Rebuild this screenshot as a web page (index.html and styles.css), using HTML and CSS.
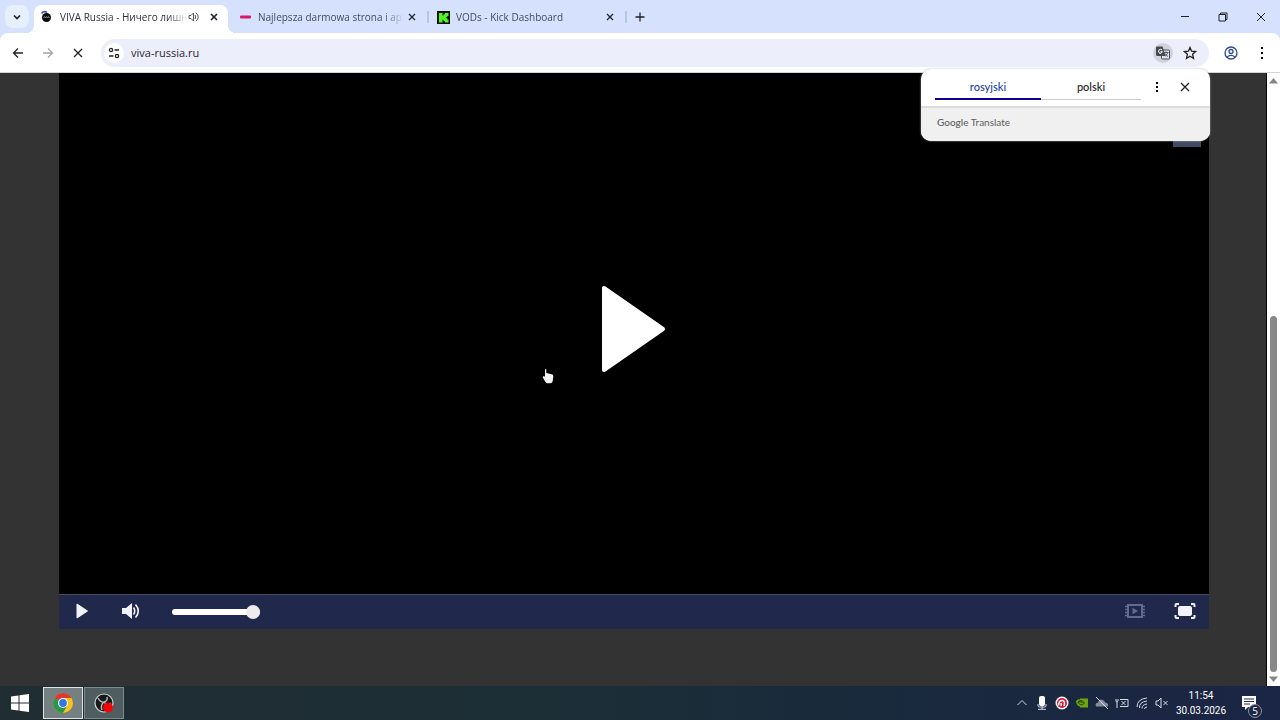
FILE: index.html
```html
<!DOCTYPE html>
<html lang="pl">
<head>
  <meta charset="UTF-8">
  <title>VIVA Russia</title>
  <link rel="stylesheet" href="styles.css">
</head>
<body>
  <!-- Tab strip -->
  <header class="tab-strip">
    <button class="tab-search" aria-label="Search tabs">
      <svg width="10" height="10" viewBox="0 0 10 10"><path d="M2 3.500l3 3 3-3" class="line bold"/></svg>
    </button>
    <div class="tab active">
      <svg class="favicon" width="14" height="14" viewBox="0 0 14 14">
        <circle cx="6.500" cy="7.500" r="4.500" fill="#08080d"/>
        <path d="M1.500 3.500Q4 .5 7 2.500" stroke="#3d4bb8" stroke-width="1.600" fill="none"/>
        <path d="M3.500 8l1-1.500 1 1.500 1-1.500 1 1.500 1-1.500.8 1.500" stroke="#aaa" stroke-width=".8" fill="none"/>
      </svg>
      <span class="tab-title">VIVA Russia - Ничего лишн</span>
      <svg class="audio" width="12" height="12" viewBox="0 0 12 12"><path d="M1 4.500h2L5.500 2v8L3 7.500H1zM7 4q1.500 2 0 4M8 1.800q4.500 4.200 0 8.400" class="line thin"/></svg>
      <button class="tab-close" aria-label="Close tab"><svg width="8" height="8" viewBox="0 0 8 8"><path d="M1 1l6 6M7 1L1 7" class="line bold"/></svg></button>
    </div>
    <div class="tab">
      <svg class="favicon" width="14" height="14" viewBox="0 0 14 14"><rect x="2" y="5.500" width="11" height="3" rx="1" fill="#d91668"/></svg>
      <span class="tab-title">Najlepsza darmowa strona i apl</span>
      <button class="tab-close" aria-label="Close tab"><svg width="8" height="8" viewBox="0 0 8 8"><path d="M1 1l6 6M7 1L1 7" class="line"/></svg></button>
    </div>
    <span class="tab-sep"></span>
    <div class="tab">
      <svg class="favicon" width="14" height="14" viewBox="0 0 14 14">
        <rect x="1" y="1" width="13" height="13" fill="#061006"/>
        <path d="M3 3h3.500v2.500h1V4.200H9V3h3.500v3h-1.200v1.200h-1.200v1h1.200v1.200h1.200v3H9v-1.200H7.500V9.800h-1v2.600H3z" fill="#4ff52a"/>
      </svg>
      <span class="tab-title">VODs - Kick Dashboard</span>
      <button class="tab-close" aria-label="Close tab"><svg width="8" height="8" viewBox="0 0 8 8"><path d="M1 1l6 6M7 1L1 7" class="line"/></svg></button>
    </div>
    <span class="tab-sep"></span>
    <button class="new-tab" aria-label="New tab"><svg width="10" height="10" viewBox="0 0 10 10"><path d="M5 .5v9M.5 5h9" class="line"/></svg></button>
    <div class="window-controls">
      <button aria-label="Minimize"><svg width="10" height="10" viewBox="0 0 10 10"><path d="M1 4.500h8" class="line thin"/></svg></button>
      <button aria-label="Restore"><svg width="10" height="10" viewBox="0 0 10 10"><path d="M1 2.500h6.500V9H1zM2.500 2.500v-1.500H9v6.500H7.500" class="line thin"/></svg></button>
      <button aria-label="Close"><svg width="10" height="10" viewBox="0 0 10 10"><path d="M1 1l8 8M9 1L1 9" class="line thin"/></svg></button>
    </div>
  </header>

  <!-- Toolbar -->
  <nav class="toolbar">
    <button class="nav-btn" aria-label="Back"><svg width="12" height="12" viewBox="0 0 12 12"><path d="M11 6H1.500M6 1.500L1.500 6 6 10.500" class="line"/></svg></button>
    <button class="nav-btn disabled" aria-label="Forward"><svg width="12" height="12" viewBox="0 0 12 12"><path d="M1 6h9.500M6 1.500L10.500 6 6 10.500" class="line"/></svg></button>
    <button class="nav-btn" aria-label="Stop"><svg width="12" height="12" viewBox="0 0 12 12"><path d="M2 2l8 8M10 2l-8 8" class="line"/></svg></button>
    <div class="omnibox">
      <button class="site-info" aria-label="Site information">
        <svg width="12" height="12" viewBox="0 0 12 12"><circle cx="3" cy="3" r="1.600" class="line"/><path d="M6.500 3H11M1 9h4.500" class="line"/><circle cx="9" cy="9" r="1.600" class="line"/></svg>
      </button>
      <input class="url" type="text" value="viva-russia.ru" aria-label="Address">
      <button class="translate-btn" aria-label="Translate this page">
        <svg width="16" height="16" viewBox="0 0 16 16">
          <rect x="6.500" y="5" width="8" height="9" rx="1" fill="#e4e6ec" stroke="#474a50"/>
          <path d="M2 1.500h5.500L10.500 11H2.500Q1 11 1 9.500v-7Q1 1.500 2 1.500z" fill="#44474d"/>
          <path d="M7.200 5Q5.800 3.600 4.300 4.600T4.300 8.200Q6.800 9 7.300 6.600H5.500" stroke="#fff" fill="none"/>
          <path d="M9 7.500h4.500M11 6.500v1M12.700 7.500Q12 10 9.800 11.500M10.200 8.500q1 2.300 2.800 3" stroke="#474a50" stroke-width=".9" fill="none"/>
        </svg>
      </button>
      <button class="star-btn" aria-label="Bookmark">
        <svg width="14" height="14" viewBox="0 0 14 14"><path d="M7 1.500l1.600 3.700 4 .4-3 2.700.9 4L7 10.200l-3.500 2.100.9-4-3-2.700 4-.4z" class="line"/></svg>
      </button>
    </div>
    <button class="profile" aria-label="Profile">
      <svg width="14" height="14" viewBox="0 0 14 14"><circle cx="7" cy="7" r="6" class="line"/><circle cx="7" cy="5.500" r="2" class="line"/><path d="M3 11q4-3.200 8 0" class="line"/></svg>
    </button>
    <button class="menu" aria-label="Menu"><svg width="4" height="14" viewBox="0 0 4 14"><path d="M1 1h2v2H1zM1 6h2v2H1zM1 11h2v2H1z"/></svg></button>

    <section class="translate-popup">
      <div class="translate-head">
        <div class="languages">
          <button class="lang selected">rosyjski</button>
          <button class="lang">polski</button>
        </div>
        <button class="popup-btn" aria-label="Options"><svg width="4" height="12" viewBox="0 0 4 12"><path d="M1 1h2v2H1zM1 5h2v2H1zM1 9h2v2H1z"/></svg></button>
        <button class="popup-btn" aria-label="Close"><svg width="10" height="10" viewBox="0 0 10 10"><path d="M1 1l8 8M9 1L1 9" class="line"/></svg></button>
      </div>
      <div class="translate-brand"><b>Google</b> Translate</div>
    </section>
  </nav>

  <!-- Page -->
  <main class="page">
    <div class="content">
      <div class="player">
        <div class="video">
          <span class="badge"></span>
          <button class="big-play" aria-label="Play">
            <svg width="66" height="88" viewBox="0 0 66 88"><path d="M3 3v82L62 44z" fill="#fff" stroke="#fff" stroke-width="4" stroke-linejoin="round"/></svg>
          </button>
          <svg class="cursor" width="12" height="16" viewBox="0 0 12 16"><path d="M3 1.500Q3.600.5 4.300 1.500V5l5.500 1.200q1.700.4 1.500 2l-.5 4.500q-.5 2.500-2.500 2.500H5.500q-1.500 0-2.500-2L.8 9.500Q.6 8 2 8.200l1 .6z" fill="#f4f4f4"/></svg>
        </div>
        <div class="controls">
          <button class="play" aria-label="Play"><svg width="14" height="18" viewBox="0 0 14 18"><path d="M2 2v14l10.500-7z" fill="#f2f3fa" stroke="#f2f3fa" stroke-linejoin="round"/></svg></button>
          <button class="mute" aria-label="Mute">
            <svg width="20" height="18" viewBox="0 0 20 18"><path d="M1 6h4l6-5v16l-6-5H1z" fill="#f2f3fa"/><path d="M12.500 5.500q2.500 3.500 0 7M14.500 2.500q5.500 6.500 0 13" stroke="#f2f3fa" stroke-width="1.600" fill="none"/></svg>
          </button>
          <input class="volume" type="range" min="0" max="100" value="100" aria-label="Volume">
          <button class="theater" aria-label="Theater mode">
            <svg width="22" height="16" viewBox="0 0 22 16"><path d="M4 2h14v12H4z" stroke="#626a90" stroke-width="2" fill="none"/><path d="M1 3.500h3M1 6.500h3M1 9.500h3M1 12.500h3M18 3.500h3M18 6.500h3M18 9.500h3M18 12.500h3" stroke="#626a90" stroke-width="1.300"/><path d="M8.500 4.800v6.400L14 8z" fill="#626a90"/></svg>
          </button>
          <button class="fullscreen" aria-label="Fullscreen">
            <svg width="22" height="18" viewBox="0 0 22 18"><rect x="4" y="4" width="14" height="10" rx="2" fill="#f2f3fa"/><path d="M1.500 5V3q0-1 1-1H5M17 2h2.500q1 0 1 1v2M20.500 13v2q0 1-1 1H17M5 16H2.500q-1 0-1-1v-2" stroke="#f2f3fa" stroke-width="2" fill="none"/></svg>
          </button>
        </div>
      </div>
    </div>
    <div class="scrollbar">
      <svg width="9" height="6" viewBox="0 0 9 6"><path d="M0 5.500L4.500 0 9 5.500z" fill="#858585"/></svg>
      <div class="scroll-track"><div class="scroll-thumb"></div></div>
      <svg width="9" height="6" viewBox="0 0 9 6"><path d="M0 .5L4.500 6 9 .5z" fill="#858585"/></svg>
    </div>
  </main>

  <!-- Taskbar -->
  <footer class="taskbar">
    <button class="start" aria-label="Start">
      <svg width="18" height="18" viewBox="0 0 18 18"><path d="M0 2.500l7.500-1v7H0zM8.500 1.300L18 0v8.500H8.500zM0 9.500h7.500v7l-7.500-1zM8.500 9.500H18V18l-9.500-1.300z" fill="#fff"/></svg>
    </button>
    <button class="app current" aria-label="Chrome">
      <svg width="20" height="20" viewBox="0 0 20 20">
        <circle cx="10" cy="10" r="10" fill="#fbc11c"/>
        <path d="M10 10L1.340 5A10 10 0 0 1 18.660 5z" fill="#dc3a31"/>
        <path d="M10 10L1.340 5A10 10 0 0 0 10 20l4.300-7.500z" fill="#28984b"/>
        <path d="M10 5h8.660L14.300 12.500z" fill="#fbc11c"/>
        <circle cx="10" cy="10" r="5" fill="#fff"/><circle cx="10" cy="10" r="3.900" fill="#3577e0"/>
      </svg>
    </button>
    <button class="app" aria-label="OBS">
      <svg width="20" height="20" viewBox="0 0 20 20">
        <circle cx="10" cy="10" r="9" fill="#17191b" stroke="#d0d3d4" stroke-width="1.200"/>
        <path d="M4 5q3 5 6 4 4-1 3-5M10 9q-4 3-2 8M10 9q3 4 7 1" stroke="#b9bdbe" stroke-width="1.400" fill="none"/>
        <circle cx="14" cy="14.500" r="5" fill="#f20505"/>
      </svg>
    </button>
    <div class="tray">
      <svg width="14" height="14" viewBox="0 0 14 14"><path d="M2.500 9L7 4.500 11.500 9" class="light"/></svg>
      <svg width="14" height="14" viewBox="0 0 14 14"><rect x="4" y="0" width="6" height="10" rx="2" fill="#fff"/><path d="M7 10v3M3 13.300h8M3 8v2q0 1 2 1h4q2 0 2-1V8" class="light"/></svg>
      <svg width="14" height="14" viewBox="0 0 14 14"><circle cx="7" cy="7" r="6.500" fill="#fff"/><circle cx="7" cy="7" r="5" fill="#d51835"/><path d="M3.500 9.500Q4 4 7.500 4.500q3 .5 1.500 5.500M6.200 10V7" stroke="#fff" stroke-width="1.500" fill="none"/></svg>
      <svg width="14" height="14" viewBox="0 0 14 14"><path d="M1 5Q3 2.500 5 3.500V2.500h8v9H5v-1Q2 10 1 6z" fill="#70a60c"/><path d="M2.500 6.500Q6 2.500 9.500 7 6 10.500 4 7.500t3.500-1" stroke="#213b15" fill="none"/></svg>
      <svg width="14" height="14" viewBox="0 0 14 14"><path d="M1 10.500Q-.5 7 3 6.500 4 2.500 8 4q2 1 2 2.500 4 .5 3 4z" fill="#858c9b"/><path d="M1 1l12 12" class="light"/></svg>
      <svg width="14" height="14" viewBox="0 0 14 14"><path d="M1 3v2q0 2 2 0V3M2 6v6M5 3.500h8v7H5M6.500 5l4 4M10.500 5l-4 4" class="light"/></svg>
      <svg width="14" height="14" viewBox="0 0 14 14"><path d="M2 11Q2 3 12 2M4.500 12Q4 6 12 5M7 12.500Q7 8.500 12 8M9.500 13q0-2 2.500-2" class="light"/></svg>
      <svg width="14" height="14" viewBox="0 0 14 14"><path d="M1 5h2l3-3v10L3 9H1zM8.500 5l4 4M12.500 5l-4 4" class="light"/></svg>
    </div>
    <time class="clock"><span>11:54</span><span>30.03.2026</span></time>
    <button class="notifications" aria-label="Notifications">
      <svg width="16" height="16" viewBox="0 0 16 16"><path d="M1 1h14v11H7l-3 3v-3H1z" fill="#fff"/><path d="M3 4h10M3 6.500h10M3 9h6" stroke="#1d2942"/></svg>
      <span class="count">5</span>
    </button>
  </footer>
</body>
</html>
```
FILE: styles.css
```css
* {
  box-sizing: border-box;
}

body {
  margin: 0;
  height: 100vh;
  display: flex;
  flex-direction: column;
  overflow: hidden;
  font-family: "Open Sans", "Noto Sans", sans-serif;
  font-size: 10px;
  background: #d5e1fd;
  color: #222;
}

button {
  display: flex;
  align-items: center;
  justify-content: center;
  flex: none;
  padding: 0;
  border: none;
  background: none;
  color: inherit;
  font: inherit;
  cursor: pointer;
}

svg {
  display: block;
  flex: none;
}

.line {
  fill: none;
  stroke: currentColor;
  stroke-width: 1.3;
}

.line.bold {
  stroke-width: 1.7;
}

.line.thin {
  stroke-width: 1;
}

.light {
  fill: none;
  stroke: #d5dae5;
  stroke-width: 1;
}

/* tab strip */
.tab-strip {
  display: flex;
  align-items: center;
  height: 33px;
  padding: 5px 4px 0 5px;
}

.tab-search {
  width: 24px;
  height: 23px;
  margin: 0 5px 5px 0;
  border-radius: 8px;
  background: #e6effc;
}

.tab {
  position: relative;
  display: flex;
  align-items: center;
  width: 194px;
  height: 28px;
  padding: 0 6px 5px;
  color: #424c60;
}

.tab.active {
  margin-right: 4px;
  border-radius: 8px 8px 0 0;
  background: #fff;
  color: #30323a;
}

.tab.active::before,
.tab.active::after {
  content: "";
  position: absolute;
  bottom: 0;
  width: 8px;
  height: 8px;
}

.tab.active::before {
  left: -8px;
  background: radial-gradient(circle at 0 0, transparent 8px, #fff 8px);
}

.tab.active::after {
  right: -8px;
  background: radial-gradient(circle at 100% 0, transparent 8px, #fff 8px);
}

.tab-title {
  flex: 1;
  margin: 0 0 0 6px;
  overflow: hidden;
  white-space: nowrap;
  mask-image: linear-gradient(to left, transparent, #000 20px);
}

.audio {
  margin-right: 6px;
  color: #555;
}

.tab-close {
  width: 16px;
  height: 16px;
  color: #1f2430;
}

.tab-sep {
  width: 2px;
  height: 12px;
  margin: 0 1px 4px;
  background: #b9c6e6;
}

.new-tab {
  width: 24px;
  height: 24px;
  margin-bottom: 4px;
}

.window-controls {
  display: flex;
  margin: 0 0 5px auto;
}

.window-controls button {
  width: 38px;
  height: 24px;
}

.window-controls button:last-child {
  width: 30px;
  margin-left: 4px;
}

/* toolbar */
.toolbar {
  position: relative;
  z-index: 1;
  display: flex;
  align-items: center;
  height: 40px;
  padding: 0 8px 0 3px;
  border-bottom: 1px solid #d4d4d8;
  border-radius: 8px 8px 0 0;
  background: #fff;
}

.nav-btn {
  width: 30px;
  height: 30px;
}

.nav-btn.disabled {
  color: #a4a5aa;
}

.omnibox {
  flex: 1;
  display: flex;
  align-items: center;
  height: 28px;
  margin-left: 8px;
  padding: 0 8px 0 3px;
  border-radius: 14px;
  background: #eceffb;
}

.site-info {
  width: 20px;
  height: 20px;
  border-radius: 50%;
  background: #fff;
}

.url {
  flex: 1;
  min-width: 0;
  padding: 0 7px;
  border: none;
  outline: none;
  background: none;
  color: #25262c;
  font: inherit;
  font-size: 11px;
}

.translate-btn {
  width: 20px;
  height: 20px;
  margin-right: 6px;
  border-radius: 50%;
  background: #d0d3dd;
}

.star-btn {
  width: 22px;
  height: 22px;
}

.profile {
  width: 24px;
  height: 24px;
  margin-left: 10px;
  color: #2c4c94;
}

.menu {
  width: 20px;
  height: 24px;
  margin-left: 9px;
}

/* translate popup */
.translate-popup {
  position: absolute;
  top: 36px;
  right: 70px;
  width: 289px;
  border-radius: 10px;
  overflow: hidden;
  background: #fff;
  box-shadow: 0 0 2px #aaa;
  font-family: Lato, sans-serif;
}

.translate-head {
  display: flex;
  align-items: center;
  height: 39px;
  padding: 0 11px 2px 14px;
  border-bottom: 2px solid #dcdcdc;
}

.languages {
  display: flex;
  flex: 1;
}

.lang {
  flex: 1;
  height: 26px;
  margin-top: 1px;
  border-bottom: 1px solid #ccc;
  font-size: 11px;
  font-weight: 500;
}

.lang.selected {
  flex: none;
  width: 106px;
  border-bottom: 2px solid #10008c;
  color: #2444a4;
}

.popup-btn {
  width: 28px;
  height: 28px;
}

.popup-btn:first-of-type {
  margin-left: 2px;
}

.translate-brand {
  height: 33px;
  padding-left: 16px;
  background: #f0f0f0;
  color: #5c5d60;
  line-height: 28px;
}

.translate-brand b {
  font-weight: 500;
}

/* page */
.page {
  flex: 1;
  display: flex;
  min-height: 0;
}

.content {
  flex: 1;
  display: flex;
  padding: 0 57px 57px 59px;
  border-right: 1px solid #050505;
  background: #333;
}

.player {
  flex: 1;
  display: flex;
  flex-direction: column;
}

.video {
  position: relative;
  flex: 1;
  display: flex;
  align-items: center;
  justify-content: center;
  background: #000;
}

.badge {
  position: absolute;
  top: 40px;
  right: 8px;
  width: 28px;
  height: 34px;
  background: #424963;
}

.big-play {
  margin-bottom: 10px;
}

.cursor {
  position: absolute;
  top: 295px;
  left: 483px;
}

.controls {
  display: flex;
  align-items: center;
  height: 35px;
  padding: 0 13px 2px 16px;
  border-top: 1px solid #454b63;
  background: #20294c;
}

.mute {
  margin-left: 32px;
}

.volume {
  appearance: none;
  width: 88px;
  height: 14px;
  margin: 1px 0 0 31px;
  background: none;
}

.volume::-webkit-slider-runnable-track {
  height: 6px;
  border-radius: 3px;
  background: #fff;
}

.volume::-webkit-slider-thumb {
  appearance: none;
  width: 14px;
  height: 14px;
  margin-top: -4px;
  border-radius: 50%;
  background: #ececec;
}

.theater {
  margin-left: auto;
}

.fullscreen {
  margin-left: 28px;
}

/* scrollbar */
.scrollbar {
  display: flex;
  flex-direction: column;
  align-items: center;
  width: 13px;
  padding: 5px 0 4px;
  background: #fff;
}

.scroll-track {
  flex: 1;
  display: flex;
  align-items: flex-end;
  padding: 4px 0;
}

.scroll-thumb {
  width: 7px;
  height: 61%;
  border-radius: 4px;
  background: #888;
}

/* taskbar */
.taskbar {
  display: flex;
  align-items: center;
  height: 34px;
  background: linear-gradient(to right, #202d33, #1d2f36 40%, #192a3b 65%, #1b2545);
  color: #fff;
}

.start {
  width: 39px;
  height: 34px;
}

.app {
  width: 40px;
  height: 32px;
  margin-right: 1px;
  border: 1px solid #7e8b8d;
  background: #4f5d60;
}

.app.current {
  margin-left: 4px;
  border-color: #dfe3e3;
  background: #758082;
}

.tray {
  display: flex;
  gap: 6px;
  margin-left: auto;
}

.clock {
  display: flex;
  flex-direction: column;
  align-items: center;
  width: 64px;
  font-family: Roboto, sans-serif;
  line-height: 15px;
}

.notifications {
  position: relative;
  width: 32px;
  height: 30px;
  margin-right: 15px;
}

.count {
  position: absolute;
  right: 3px;
  bottom: 0;
  width: 14px;
  height: 14px;
  border: 1px solid #8a93a5;
  border-radius: 50%;
  background: #1c2742;
  line-height: 12px;
  text-align: center;
}
```
